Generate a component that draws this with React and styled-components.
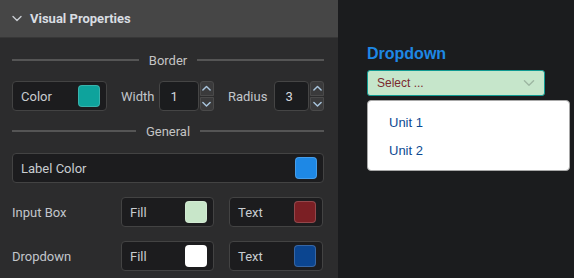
import React from "react";
import styled, { createGlobalStyle } from "styled-components";

const Global = createGlobalStyle`
  html, body { margin: 0; padding: 0; background: #1b1c1e; }
  body { font-family: Roboto, "Liberation Sans", Arial, sans-serif; }
  * { box-sizing: border-box; }
`;

const Page = styled.div`
  display: flex;
  width: 574px;
  height: 278px;
  background: #1b1c1e;
  overflow: hidden;
`;

const Panel = styled.div`
  width: 338px;
  height: 278px;
  background: #2c2c2d;
  display: flex;
  flex-direction: column;
`;

const Header = styled.div`
  height: 38px;
  background: #464646;
  border-bottom: 1px solid #373737;
  display: flex;
  align-items: center;
  padding-left: 12px;
  gap: 8px;
  color: #d9dde2;
  font-size: 13px;
  font-weight: 700;
`;

const Body = styled.div`
  padding: 0 14px 0 12px;
  display: flex;
  flex-direction: column;
`;

const Divider = styled.div`
  display: flex;
  align-items: center;
  gap: 10px;
  height: 16px;
  margin-top: ${(p) => p.$mt}px;
  color: #c4c4c4;
  font-size: 13px;
  &::before, &::after {
    content: "";
    flex: 1;
    height: 2px;
    background: #555;
  }
`;

const Row = styled.div`
  display: flex;
  align-items: center;
  margin-top: ${(p) => p.$mt}px;
  height: 30px;
`;

const GridRow = styled.div`
  display: grid;
  grid-template-columns: 94px 93px 94px;
  column-gap: 15px;
  align-items: center;
  margin-top: ${(p) => p.$mt}px;
  height: 30px;
`;

const ColorBox = styled.div`
  width: ${(p) => p.$w || "auto"};
  height: 30px;
  background: #1c1c1e;
  border: 1px solid #434343;
  border-radius: 4px;
  display: flex;
  align-items: center;
  justify-content: space-between;
  padding: 0 6px 0 8px;
  color: #c9ccd0;
  font-size: 13px;
  flex: ${(p) => (p.$grow ? 1 : "none")};
`;

const Swatch = styled.div`
  width: 22px;
  height: 22px;
  border-radius: 4px;
  background: ${(p) => p.$c};
  border: 1px solid rgba(255, 255, 255, 0.18);
`;

const Label = styled.span`
  color: #c2c6cb;
  font-size: 13px;
  margin: ${(p) => p.$m || "0"};
  white-space: nowrap;
`;

const NumberGroup = styled.div`
  display: flex;
  align-items: stretch;
  width: ${(p) => p.$w}px;
  height: 30px;
  gap: 1px;
`;

const NumberInput = styled.div`
  flex: 1;
  background: #1b1c1e;
  border: 1px solid #454545;
  border-radius: 4px;
  color: #d4d8de;
  font-size: 13px;
  display: flex;
  align-items: center;
  padding-left: 10px;
`;

const Spinner = styled.div`
  width: 14px;
  display: flex;
  flex-direction: column;
  gap: 1px;
`;

const SpinBtn = styled.div`
  flex: 1;
  background: #3a3a3b;
  border: 1px solid #4a4a4a;
  border-radius: ${(p) => (p.$up ? "3px 3px 0 0" : "0 0 3px 3px")};
  display: flex;
  align-items: center;
  justify-content: center;
`;

const Right = styled.div`
  flex: 1;
  padding: 44px 4px 0 29px;
  display: flex;
  flex-direction: column;
`;

const Title = styled.div`
  color: #1e88e5;
  font-size: 16px;
  font-weight: 700;
  line-height: 19px;
  font-family: "Liberation Sans", Arial, sans-serif;
`;

const Select = styled.div`
  margin-top: 7px;
  width: 178px;
  height: 26px;
  background: #c6e6cb;
  border: 1px solid #109a92;
  border-radius: 3px;
  display: flex;
  align-items: center;
  justify-content: space-between;
  padding: 0 9px 0 9px;
  color: #7b2a2f;
  font-size: 12px;
  font-family: "Liberation Sans", Arial, sans-serif;
`;

const Menu = styled.div`
  margin-top: 4px;
  width: 203px;
  height: 71px;
  background: #fff;
  border: 1px solid #a8a8a8;
  border-radius: 4px;
  padding: 7px 0 0 21px;
  display: flex;
  flex-direction: column;
`;

const Item = styled.div`
  height: 28px;
  display: flex;
  align-items: center;
  color: #0d4a92;
  font-size: 13px;
  font-family: "Liberation Sans", Arial, sans-serif;
`;

const Chevron = ({ up, size = 8, color = "#a8c4dc", w = 1.6 }) => (
  <svg width={size + 2} height={size / 2 + 3} viewBox="0 0 10 7">
    <path
      d={up ? "M1 5.5 L5 1.5 L9 5.5" : "M1 1.5 L5 5.5 L9 1.5"}
      fill="none"
      stroke={color}
      strokeWidth={w}
      strokeLinecap="round"
      strokeLinejoin="round"
    />
  </svg>
);

const NumberField = ({ value, w }) => (
  <NumberGroup $w={w}>
    <NumberInput>{value}</NumberInput>
    <Spinner>
      <SpinBtn $up>
        <Chevron up size={7} />
      </SpinBtn>
      <SpinBtn>
        <Chevron size={7} />
      </SpinBtn>
    </Spinner>
  </NumberGroup>
);

export default function App() {
  return (
    <Page>
      <Global />
      <Panel>
        <Header>
          <Chevron size={8} color="#c8ccd2" w={1.4} />
          Visual Properties
        </Header>
        <Body>
          <Divider $mt={14}>Border</Divider>
          <Row $mt={13}>
            <ColorBox $w="95px">
              Color
              <Swatch $c="#0ea39c" />
            </ColorBox>
            <Label $m="0 5px 0 14px">Width</Label>
            <NumberField value="1" w={56} />
            <Label $m="0 7px 0 14px">Radius</Label>
            <NumberField value="3" w={51} />
          </Row>
          <Divider $mt={12}>General</Divider>
          <Row $mt={14}>
            <ColorBox $grow>
              Label Color
              <Swatch $c="#1e88e5" />
            </ColorBox>
          </Row>
          <GridRow $mt={14}>
            <Label>Input Box</Label>
            <ColorBox>
              Fill
              <Swatch $c="#c8e6c9" />
            </ColorBox>
            <ColorBox>
              Text
              <Swatch $c="#7b1f24" />
            </ColorBox>
          </GridRow>
          <GridRow $mt={14}>
            <Label>Dropdown</Label>
            <ColorBox>
              Fill
              <Swatch $c="#ffffff" />
            </ColorBox>
            <ColorBox>
              Text
              <Swatch $c="#0b4590" />
            </ColorBox>
          </GridRow>
        </Body>
      </Panel>
      <Right>
        <Title>Dropdown</Title>
        <Select>
          Select ...
          <Chevron size={10} color="#9db7a2" w={1.2} />
        </Select>
        <Menu>
          <Item>Unit 1</Item>
          <Item>Unit 2</Item>
        </Menu>
      </Right>
    </Page>
  );
}
